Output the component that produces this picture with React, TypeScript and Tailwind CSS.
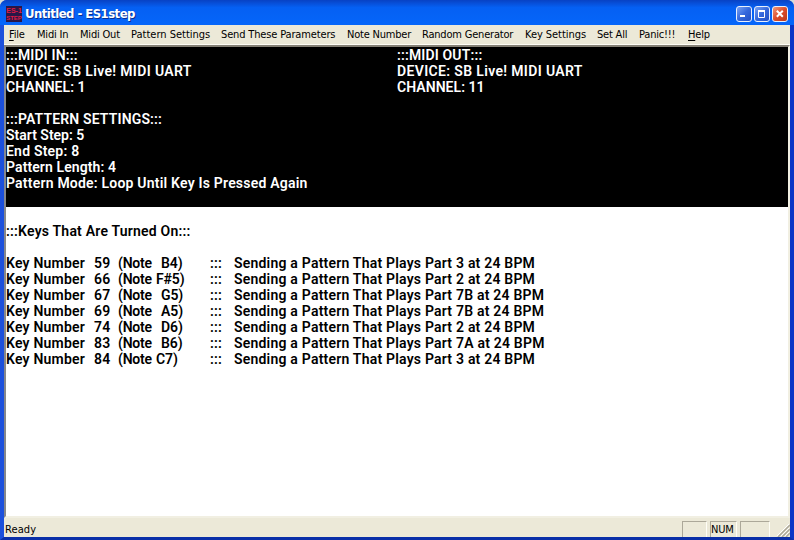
import React from "react";

const menu = [
  { label: "File", cls: "w-[28px]", key: true },
  { label: "Midi In", cls: "w-[43px]" },
  { label: "Midi Out", cls: "w-[51px]" },
  { label: "Pattern Settings", cls: "w-[90px] tracking-[0px]" },
  { label: "Send These Parameters", cls: "w-[126px] tracking-[-0.15px]" },
  { label: "Note Number", cls: "w-[75px]" },
  { label: "Random Generator", cls: "w-[103px]" },
  { label: "Key Settings", cls: "w-[72px] tracking-[-0.05px]" },
  { label: "Set All", cls: "w-[42px]" },
  { label: "Panic!!!", cls: "w-[49px]" },
  { label: "Help", cls: "w-[30px]", key: true },
];

const keys = [
  { n: 59, note: "B4)", pad: "pl-[5px]", part: "3" },
  { n: 66, note: "F#5)", pad: "pl-0", part: "2" },
  { n: 67, note: "G5)", pad: "pl-[5px]", part: "7B" },
  { n: 69, note: "A5)", pad: "pl-[5px]", part: "7B" },
  { n: 74, note: "D6)", pad: "pl-[5px]", part: "2" },
  { n: 83, note: "B6)", pad: "pl-[5px]", part: "7A" },
  { n: 84, note: "C7)", pad: "pl-0", part: "3" },
];

function AppIcon() {
  return (
    <div className="flex h-4 w-4 flex-col items-center justify-center gap-px overflow-hidden bg-[#2a1746] font-['Liberation_Sans',sans-serif] text-[7px] font-bold leading-[7px] text-[#e01b45]">
      <span>ES-1</span>
      <span className="text-[6px]">STEP</span>
    </div>
  );
}

function CaptionButton({ kind }: { kind: "min" | "max" | "close" }) {
  const bg =
    kind === "close"
      ? "bg-linear-to-br from-[#ee9878] via-[#dc4b2a] to-[#b93a1b]"
      : "bg-linear-to-br from-[#7ba2f3] via-[#3568dc] to-[#2450c4]";
  return (
    <div className={"flex h-4 w-4 items-center justify-center rounded-[3px] border border-[#e8effc] " + bg}>
      <svg width="14" height="14" viewBox="0 0 14 14" fill="none" stroke="#fff">
        {kind === "min" && <path d="M3 9h5" strokeWidth="2" />}
        {kind === "max" && (
          <>
            <path d="M3.5 4v6.5h6V4" />
            <path d="M3 4h7" strokeWidth="2" />
          </>
        )}
        {kind === "close" && <path d="M3.8 3.8l6 6M9.8 3.8l-6 6" strokeWidth="2" />}
      </svg>
    </div>
  );
}

export default function App() {
  return (
    <div className="h-[540px] w-[794px] bg-[#d5dcd8]">
      <div className="flex h-full w-full flex-col overflow-hidden rounded-t-[7px] bg-[#0831d9] font-['DejaVu_Sans_Condensed','DejaVu_Sans',sans-serif] text-[11px] text-black">
        <div className="flex h-[25px] shrink-0 items-center bg-linear-to-b from-[#0842c4] from-0% via-[#0560f3] via-30% to-[#0566fa] pt-[3px] pr-[6px] pl-[6px]">
          <AppIcon />
          <span className="ml-[3px] grow whitespace-pre text-[13px] leading-4 font-bold tracking-[-0.55px] text-white [text-shadow:1px_1px_#0c2f8f]">
            Untitled - ES1step
          </span>
          <div className="flex gap-[2px]">
            <CaptionButton kind="min" />
            <CaptionButton kind="max" />
            <CaptionButton kind="close" />
          </div>
        </div>

        <div className="flex min-h-0 grow flex-col border-r-4 border-b-[3px] border-l-4 border-t-0 border-r-[#0a36c6] border-b-[#0a2fa8] border-l-[#1c50dc] bg-[#ece9d8]">
          <div className="flex h-[19px] shrink-0 items-center pl-[5px] tracking-[-0.2px]">
            {menu.map((m) => (
              <span key={m.label} className={"shrink-0 whitespace-nowrap leading-[14px] " + m.cls}>
                {m.key ? (
                  <>
                    <span className="underline underline-offset-2">{m.label[0]}</span>
                    {m.label.slice(1)}
                  </>
                ) : (
                  m.label
                )}
              </span>
            ))}
          </div>

          <div className="flex h-[474px] shrink-0 flex-col border-t border-t-[#fffef6]">
            <div className="flex grow flex-col border-t-2 border-r-2 border-b-2 border-l-2 border-t-[#858176] border-r-[#f1efe2] border-b-[#f1efe2] border-l-[#85878c] bg-white font-['Roboto','Liberation_Sans',sans-serif] text-[14px] leading-4 font-semibold tracking-[0.21px]">
              <div className="h-[160px] shrink-0 whitespace-pre bg-black text-white">
                <div className="flex h-16">
                  <div className="w-[391px]">
                    <div className="tracking-[0.15px]">:::MIDI IN:::</div>
                    <div className="tracking-[0.35px]">DEVICE: SB Live! MIDI UART</div>
                    <div className="tracking-[0.05px]">CHANNEL: 1</div>
                  </div>
                  <div>
                    <div className="tracking-[0.15px]">:::MIDI OUT:::</div>
                    <div className="tracking-[0.35px]">DEVICE: SB Live! MIDI UART</div>
                    <div className="tracking-[0.05px]">CHANNEL: 11</div>
                  </div>
                </div>
                <div className="tracking-[0.15px]">:::PATTERN SETTINGS:::</div>
                <div className="tracking-[0px]">Start Step: 5</div>
                <div>End Step: 8</div>
                <div className="tracking-[0.1px]">Pattern Length: 4</div>
                <div>Pattern Mode: Loop Until Key Is Pressed Again</div>
              </div>
              <div className="pt-4">:::Keys That Are Turned On:::</div>
              <div className="whitespace-pre pt-4">
                {keys.map((k) => (
                  <div key={k.n} className="flex h-4">
                    <span className="w-[88px]">Key Number</span>
                    <span className="w-[24px]">{k.n}</span>
                    <span className="w-[38px] tracking-[-0.2px]">(Note</span>
                    <span className={"w-[54px] tracking-[-0.1px] " + k.pad}>{k.note}</span>
                    <span className="w-[24px]">:::</span>
                    <span>Sending a Pattern That Plays Part {k.part} at 24 BPM</span>
                  </div>
                ))}
              </div>
            </div>
          </div>

          <div className="flex grow items-end">
            <span className="grow pl-px leading-[15px] tracking-[0.1px]">Ready</span>
            <div className="flex h-4 gap-[3px]">
              <div className="w-[25px] border-t border-l border-[#aca899] border-r border-r-[#fffef6]" />
              <div className="w-[27px] border-t border-l border-[#aca899] border-r border-r-[#fffef6] leading-[16px] tracking-[-0.2px]">NUM</div>
              <div className="w-[30px] border-t border-l border-[#aca899] border-r border-r-[#fffef6]" />
            </div>
            <svg className="ml-[7px]" width="13" height="13" viewBox="0 0 13 13" strokeWidth="1.5">
              <path d="M1 13L13 1M5 13l8-8M9 13l4-4" stroke="#aca899" />
              <path d="M0 12L12 0M4 12l8-8M8 12l4-4" stroke="#fff" strokeWidth="1" />
            </svg>
          </div>
        </div>
      </div>
    </div>
  );
}
